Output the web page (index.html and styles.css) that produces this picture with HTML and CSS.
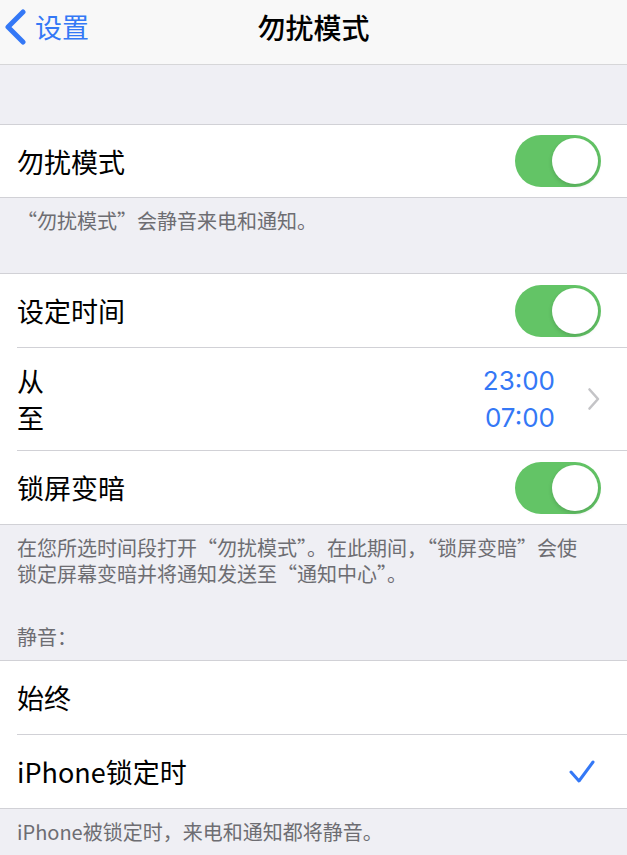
FILE: index.html
```html
<!DOCTYPE html>
<html lang="zh-CN">
<head>
  <meta charset="UTF-8">
  <title>勿扰模式</title>
  <link rel="stylesheet" href="styles.css">
</head>
<body>

  <!-- Navigation bar -->
  <header class="nav">
    <a href="#" class="nav-back">
      <svg class="back-chevron" width="24" height="36" viewBox="0 0 24 36">
        <polyline points="20,3 5,18 20,33" fill="none" stroke="#3478f6" stroke-width="5" stroke-linecap="round" stroke-linejoin="round"/>
      </svg>
      <span>设置</span>
    </a>
    <h1 class="nav-title">勿扰模式</h1>
  </header>

  <main class="settings">

    <!-- Main switch -->
    <ul class="group first">
      <li class="cell">
        <div class="cell-body">
          <span class="cell-label">勿扰模式</span>
          <span class="switch on"></span>
        </div>
      </li>
    </ul>
    <p class="group-footer">“勿扰模式”会静音来电和通知。</p>

    <!-- Schedule -->
    <ul class="group">
      <li class="cell">
        <div class="cell-body">
          <span class="cell-label">设定时间</span>
          <span class="switch on"></span>
        </div>
      </li>
      <li class="cell">
        <div class="cell-body tall">
          <div class="cell-stack">
            <span>从</span>
            <span>至</span>
          </div>
          <div class="time-stack">
            <span>23:00</span>
            <span>07:00</span>
          </div>
          <svg class="chevron" width="14" height="24" viewBox="0 0 14 24">
            <polyline points="2.5,2.5 11,12 2.5,21.5" fill="none" stroke="#c4c4c7" stroke-width="2.6" stroke-linecap="round" stroke-linejoin="round"/>
          </svg>
        </div>
      </li>
      <li class="cell">
        <div class="cell-body">
          <span class="cell-label">锁屏变暗</span>
          <span class="switch on"></span>
        </div>
      </li>
    </ul>
    <p class="group-footer wide">在您所选时间段打开“勿扰模式”。在此期间，“锁屏变暗”会使锁定屏幕变暗并将通知发送至“通知中心”。</p>

    <!-- Silence -->
    <p class="group-header">静音：</p>
    <ul class="group flush">
      <li class="cell">
        <div class="cell-body">
          <span class="cell-label">始终</span>
        </div>
      </li>
      <li class="cell">
        <div class="cell-body">
          <span class="cell-label">iPhone锁定时</span>
          <svg class="check" width="28" height="26" viewBox="0 0 28 26">
            <polyline points="3,13 11,22 25,3" fill="none" stroke="#3478f6" stroke-width="3" stroke-linecap="round" stroke-linejoin="round"/>
          </svg>
        </div>
      </li>
    </ul>
    <p class="group-footer">iPhone被锁定时，来电和通知都将静音。</p>

  </main>

</body>
</html>
```

FILE: styles.css
```css
body {
  margin: 0;
  background: #efeff4;
  font-family: "Noto Sans CJK SC", "Noto Sans", sans-serif;
  color: #000;
}

/* nav bar */
.nav {
  height: 65px;
  box-sizing: border-box;
  padding-bottom: 11px;
  background: #f8f8f8;
  border-bottom: 1px solid #d6d6d8;
  display: flex;
  align-items: center;
  justify-content: center;
  position: relative;
}
.nav-back {
  position: absolute;
  left: 3px;
  top: 9px;
  display: flex;
  align-items: center;
  gap: 8px;
  color: #3478f6;
  text-decoration: none;
  font-size: 27px;
  line-height: 36px;
}
.nav-title {
  margin: 0;
  font-size: 28px;
  font-weight: 500;
  line-height: 36px;
}

/* groups */
.settings {
  padding-top: 59px;
}
.group {
  list-style: none;
  margin: 39px 0 0;
  padding: 0;
  background: #fff;
  border-top: 1px solid #d1d1d6;
  border-bottom: 1px solid #d1d1d6;
}
.group.first,
.group.flush {
  margin-top: 0;
}
.cell {
  padding-left: 17px;
}
.cell-body {
  display: flex;
  align-items: center;
  min-height: 73px;
  padding-right: 26px;
  border-bottom: 1px solid #d1d1d6;
}
.group.first .cell-body {
  min-height: 72px;
}
.cell:last-child .cell-body {
  border-bottom: none;
}
.cell-body.tall {
  min-height: 102px;
}
.cell-label {
  flex: 1;
  font-size: 27px;
}
.cell-stack {
  flex: 1;
  display: flex;
  flex-direction: column;
  font-size: 27px;
  line-height: 37px;
}
.time-stack {
  display: flex;
  flex-direction: column;
  align-items: flex-end;
  font-family: "Inter", "Noto Sans CJK SC", sans-serif;
  font-size: 26px;
  line-height: 37px;
  color: #3478f6;
}
.chevron {
  margin-left: 32px;
}
.check {
  margin-right: 5px;
}

/* switch */
.switch {
  position: relative;
  width: 86px;
  height: 52px;
  border-radius: 26px;
  background: #e9e9eb;
}
.switch.on {
  background: #63c466;
}
.switch::after {
  content: "";
  position: absolute;
  top: 3px;
  left: 3px;
  width: 46px;
  height: 46px;
  border-radius: 50%;
  background: #fff;
  box-shadow: 0 2px 4px rgba(0,0,0,0.15);
}
.switch.on::after {
  left: 37px;
}

/* footers and headers */
.group-footer,
.group-header {
  margin: 0;
  padding: 10px 17px 0;
  font-size: 20px;
  line-height: 26px;
  color: #6d6d72;
}
.group-footer.wide {
  padding-right: 40px;
}
.group-header {
  padding: 37px 17px 10px;
}
```
